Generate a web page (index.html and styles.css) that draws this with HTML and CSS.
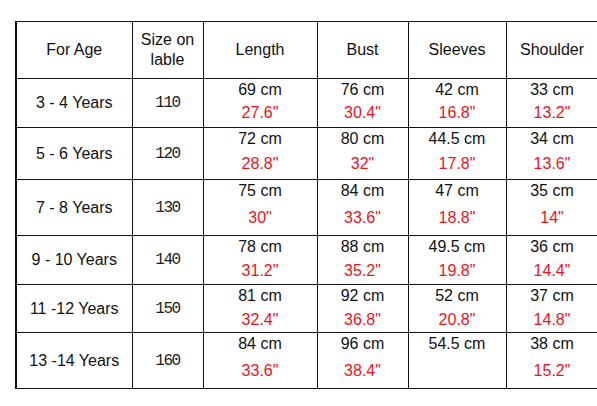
FILE: index.html
```html
<!DOCTYPE html>
<html>
<head>
<meta charset="utf-8">
<link rel="stylesheet" href="styles.css">
</head>
<body>
<table class="size-table">
  <colgroup>
    <col class="c-age"><col class="c-size"><col class="c-len"><col class="c-bust"><col class="c-sleeve"><col class="c-shoulder">
  </colgroup>
  <tr class="head">
    <th>For Age</th>
    <th class="two">Size on<br>lable</th>
    <th>Length</th>
    <th>Bust</th>
    <th>Sleeves</th>
    <th>Shoulder</th>
  </tr>
  <tr class="r1">
    <td class="age">3 - 4 Years</td><td class="size">110</td>
    <td class="m"><div>69 cm</div><div class="in">27.6"</div></td>
    <td class="m"><div>76 cm</div><div class="in">30.4"</div></td>
    <td class="m"><div>42 cm</div><div class="in">16.8"</div></td>
    <td class="m"><div>33 cm</div><div class="in">13.2"</div></td>
  </tr>
  <tr class="r2">
    <td class="age">5 - 6 Years</td><td class="size">120</td>
    <td class="m"><div>72 cm</div><div class="in">28.8"</div></td>
    <td class="m"><div>80 cm</div><div class="in">32"</div></td>
    <td class="m"><div>44.5 cm</div><div class="in">17.8"</div></td>
    <td class="m"><div>34 cm</div><div class="in">13.6"</div></td>
  </tr>
  <tr class="r3">
    <td class="age">7 - 8 Years</td><td class="size">130</td>
    <td class="m"><div>75 cm</div><div class="in">30"</div></td>
    <td class="m"><div>84 cm</div><div class="in">33.6"</div></td>
    <td class="m"><div>47 cm</div><div class="in">18.8"</div></td>
    <td class="m"><div>35 cm</div><div class="in">14"</div></td>
  </tr>
  <tr class="r4">
    <td class="age">9 - 10 Years</td><td class="size">140</td>
    <td class="m"><div>78 cm</div><div class="in">31.2"</div></td>
    <td class="m"><div>88 cm</div><div class="in">35.2"</div></td>
    <td class="m"><div>49.5 cm</div><div class="in">19.8"</div></td>
    <td class="m"><div>36 cm</div><div class="in">14.4"</div></td>
  </tr>
  <tr class="r5">
    <td class="age">11 -12 Years</td><td class="size">150</td>
    <td class="m"><div>81 cm</div><div class="in">32.4"</div></td>
    <td class="m"><div>92 cm</div><div class="in">36.8"</div></td>
    <td class="m"><div>52 cm</div><div class="in">20.8"</div></td>
    <td class="m"><div>37 cm</div><div class="in">14.8"</div></td>
  </tr>
  <tr class="r6">
    <td class="age">13 -14 Years</td><td class="size">160</td>
    <td class="m"><div>84 cm</div><div class="in">33.6"</div></td>
    <td class="m"><div>96 cm</div><div class="in">38.4"</div></td>
    <td class="m"><div>54.5 cm</div><div class="in">&nbsp;</div></td>
    <td class="m"><div>38 cm</div><div class="in">15.2"</div></td>
  </tr>
</table>
</body>
</html>
```
FILE: styles.css
```css
html, body {
  margin: 0;
  padding: 0;
  background: #fff;
}
body {
  padding: 21px 0 0 15px;
  font-family: "Liberation Sans", Arial, sans-serif;
  color: #111;
}
.size-table {
  border-collapse: collapse;
  table-layout: fixed;
  width: 582px;
  font-size: 16px;
}
.c-age { width: 116px; }
.c-size { width: 71px; }
.c-len { width: 114px; }
.c-bust { width: 91px; }
.c-sleeve { width: 98px; }
.c-shoulder { width: 92px; }
.size-table th, .size-table td {
  border: 1px solid #111;
  padding: 0;
  text-align: center;
  font-weight: normal;
}
.size-table tr > :first-child {
  border-left-width: 2px;
}
.head th {
  height: 56px;
  vertical-align: middle;
}
.head th.two {
  line-height: 20px;
}
.age {
  vertical-align: middle;
}
.size {
  vertical-align: middle;
  font-family: "Liberation Mono", "DejaVu Sans Mono", monospace;
  font-size: 16px;
  letter-spacing: -1.4px;
  line-height: 20px;
  padding-top: 2px;
  color: #222;
}
.m {
  vertical-align: top;
  line-height: 22px;
}
.in {
  color: #e8141c;
}
.r1 td { height: 48px; }
.r2 td { height: 51px; }
.r3 td { height: 55px; }
.r4 td { height: 48px; }
.r5 td { height: 47px; }
.r6 td { height: 55px; }
.r1 .in { margin-top: 1px; }
.r2 .in { margin-top: 3px; }
.r3 .in { margin-top: 5px; }
.r4 .in { margin-top: 2px; }
.r5 .in { margin-top: 2px; }
.r6 .in { margin-top: 5px; }
```
